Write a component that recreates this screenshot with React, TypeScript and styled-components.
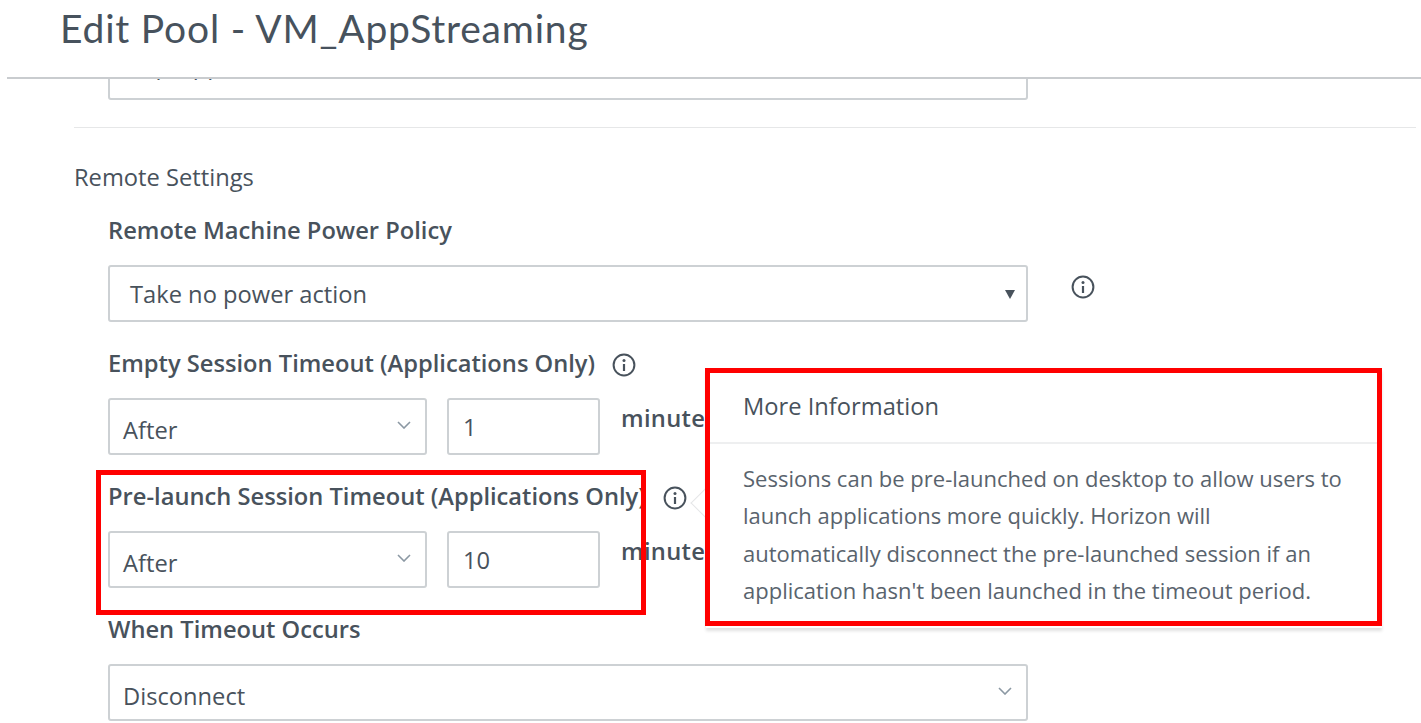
import { FC } from 'react'
import styled, { createGlobalStyle } from 'styled-components'

const GlobalStyle = createGlobalStyle`
  html, body {
    margin: 0;
    padding: 0;
    background: #fff;
  }
  * {
    box-sizing: border-box;
  }
`

const InfoIcon: FC = () => (
  <InfoSvg viewBox="0 0 24 24" fill="none" stroke="#48525c">
    <circle cx="12" cy="12" r="10.4" strokeWidth="2" />
    <circle cx="12" cy="7.4" r="1.5" fill="#48525c" stroke="none" />
    <path d="M12 11v7" strokeWidth="2.2" />
  </InfoSvg>
)

const Chevron: FC = () => (
  <ChevronSvg viewBox="0 0 14 8" fill="none" stroke="#8b98a3" strokeWidth="1.6">
    <path d="M1 1l6 6 6-6" />
  </ChevronSvg>
)

const App: FC = () => {
  return (
    <Page>
      <GlobalStyle />
      <Header>
        <Title>Edit Pool - VM_AppStreaming</Title>
      </Header>
      <Content>
        <ClippedField>
          <Field $wide $indent={20} $pad={0}>
            <ScrolledText>Exp-App</ScrolledText>
          </Field>
        </ClippedField>
        <Divider />
        <SectionTitle>Remote Settings</SectionTitle>
        <Form>
          <Label $top={27}>Remote Machine Power Policy</Label>
          <FieldRow $gap={43}>
            <Field $wide $indent={20} $pad={1}>
              Take no power action
              <FilledArrow />
            </Field>
            <IconSlot $shift={-13}>
              <InfoIcon />
            </IconSlot>
          </FieldRow>
          <Label $top={29}>
            Empty Session Timeout (Applications Only)
            <InfoIcon />
          </Label>
          <FieldRow $gap={20}>
            <Field>
              After
              <Chevron />
            </Field>
            <NumberBox>1</NumberBox>
            <Unit>minutes</Unit>
          </FieldRow>
          <Label $top={29}>
            Pre-launch Session Timeout (Applications Only)
            <InfoIcon />
          </Label>
          <FieldRow $gap={20}>
            <Field>
              After
              <Chevron />
            </Field>
            <NumberBox>10</NumberBox>
            <Unit>minutes</Unit>
          </FieldRow>
          <Label $top={29}>When Timeout Occurs</Label>
          <FieldRow $gap={0}>
            <Field $wide>
              Disconnect
              <Chevron />
            </Field>
          </FieldRow>
        </Form>
        <Popover>
          <PopoverArrow />
          <PopoverTitle>More Information</PopoverTitle>
          <PopoverBody>
            Sessions can be pre-launched on desktop to allow users to launch
            applications more quickly. Horizon will automatically disconnect
            the pre-launched session if an application hasn't been launched in
            the timeout period.
          </PopoverBody>
        </Popover>
        <PreLaunchMark />
        <PopoverMark />
      </Content>
    </Page>
  )
}

export default App

const Page = styled.div`
  position: relative;
  width: 1421px;
  height: 723px;
  overflow: hidden;
  background: #fff;
  color: #48525c;
  font-family: 'Open Sans', 'Noto Sans', sans-serif;
`
const Header = styled.header`
  height: 79px;
  margin-left: 7px;
  padding: 5px 0 0 53px;
  border-bottom: 2px solid #c9cccf;
`
const Title = styled.h1`
  margin: 0;
  font-family: Lato, sans-serif;
  font-size: 39px;
  line-height: 46px;
  font-weight: 400;
  letter-spacing: 0.8px;
  color: #47525d;
`
const Content = styled.main`
  position: relative;
  height: 644px;
  overflow: hidden;
  padding-left: 74px;
`
const ClippedField = styled.div`
  height: 21px;
  margin-left: 34px;
  display: flex;
  align-items: flex-end;
`
const ScrolledText = styled.span`
  margin-top: -13px;
`
const Divider = styled.div`
  height: 1px;
  margin: 27px 5px 0 0;
  background: #e6e7e8;
`
const SectionTitle = styled.h2`
  margin: 35px 0 0;
  font-size: 23.7px;
  line-height: 28px;
  font-weight: 400;
`
const Form = styled.div`
  padding-left: 34px;
`
const Label = styled.div<{ $top: number }>`
  display: flex;
  align-items: center;
  gap: 17px;
  margin-top: ${(p) => p.$top}px;
  height: 24px;
  font-size: 23.7px;
  font-weight: 600;
  white-space: nowrap;
  color: #48525c;

  svg {
    margin-top: 4px;
  }
`
const FieldRow = styled.div<{ $gap: number }>`
  display: flex;
  gap: ${(p) => p.$gap}px;
  margin-top: 23px;
`
const Field = styled.div<{ $wide?: boolean; $indent?: number; $pad?: number }>`
  position: relative;
  flex: none;
  display: flex;
  align-items: center;
  justify-content: space-between;
  width: ${(p) => (p.$wide ? 920 : 319)}px;
  height: 57px;
  padding: ${(p) => p.$pad ?? 7}px 14px 0 ${(p) => p.$indent ?? 13}px;
  border: 2px solid #cdd1d4;
  border-radius: 3px;
  background: #fff;
  font-size: 23.7px;
`
const NumberBox = styled.div`
  flex: none;
  width: 153px;
  height: 57px;
  padding: 0 14px;
  display: flex;
  align-items: center;
  border: 2px solid #cdd1d4;
  border-radius: 3px;
  font-size: 23.7px;
`
const Unit = styled.div`
  align-self: flex-start;
  margin: 4px 0 0 1px;
  font-size: 23.7px;
  font-weight: 600;
  letter-spacing: 0.3px;
`
const IconSlot = styled.div<{ $shift: number }>`
  margin-top: ${(p) => p.$shift}px;
  display: flex;
  align-items: center;
`
const InfoSvg = styled.svg`
  flex: none;
  width: 24px;
  height: 24px;
`
const ChevronSvg = styled.svg`
  flex: none;
  width: 14px;
  height: 8px;
  margin-top: -10px;
`
const FilledArrow = styled.span`
  width: 0;
  height: 0;
  margin: 0 -3px 0 0;
  border-left: 5px solid transparent;
  border-right: 5px solid transparent;
  border-top: 9px solid #48525c;
`
const Popover = styled.aside`
  position: absolute;
  left: 706px;
  top: 290px;
  width: 676px;
  height: 259px;
  background: #fff;
  box-shadow: 0 3px 3px rgba(0, 0, 0, 0.12);
`
const PopoverArrow = styled.span`
  position: absolute;
  left: -11px;
  top: 123px;
  width: 22px;
  height: 22px;
  transform: rotate(45deg);
  background: #fff;
  border-left: 1px solid #e5e6e7;
  border-bottom: 1px solid #e5e6e7;
`
const PopoverTitle = styled.div`
  position: relative;
  height: 75px;
  padding: 22px 0 0 37px;
  border-bottom: 2px solid #eeeff0;
  font-size: 23.7px;
  line-height: 30px;
`
const PopoverBody = styled.p`
  position: relative;
  margin: 0;
  padding: 16px 34px 0 37px;
  font-size: 22px;
  line-height: 37.4px;
  color: #59636d;
`
const Mark = styled.div`
  position: absolute;
  border: 5px solid #ff0000;
  pointer-events: none;
`
const PreLaunchMark = styled(Mark)`
  left: 96px;
  top: 391px;
  width: 550px;
  height: 145px;
`
const PopoverMark = styled(Mark)`
  left: 705px;
  top: 289px;
  width: 677px;
  height: 258px;
`
